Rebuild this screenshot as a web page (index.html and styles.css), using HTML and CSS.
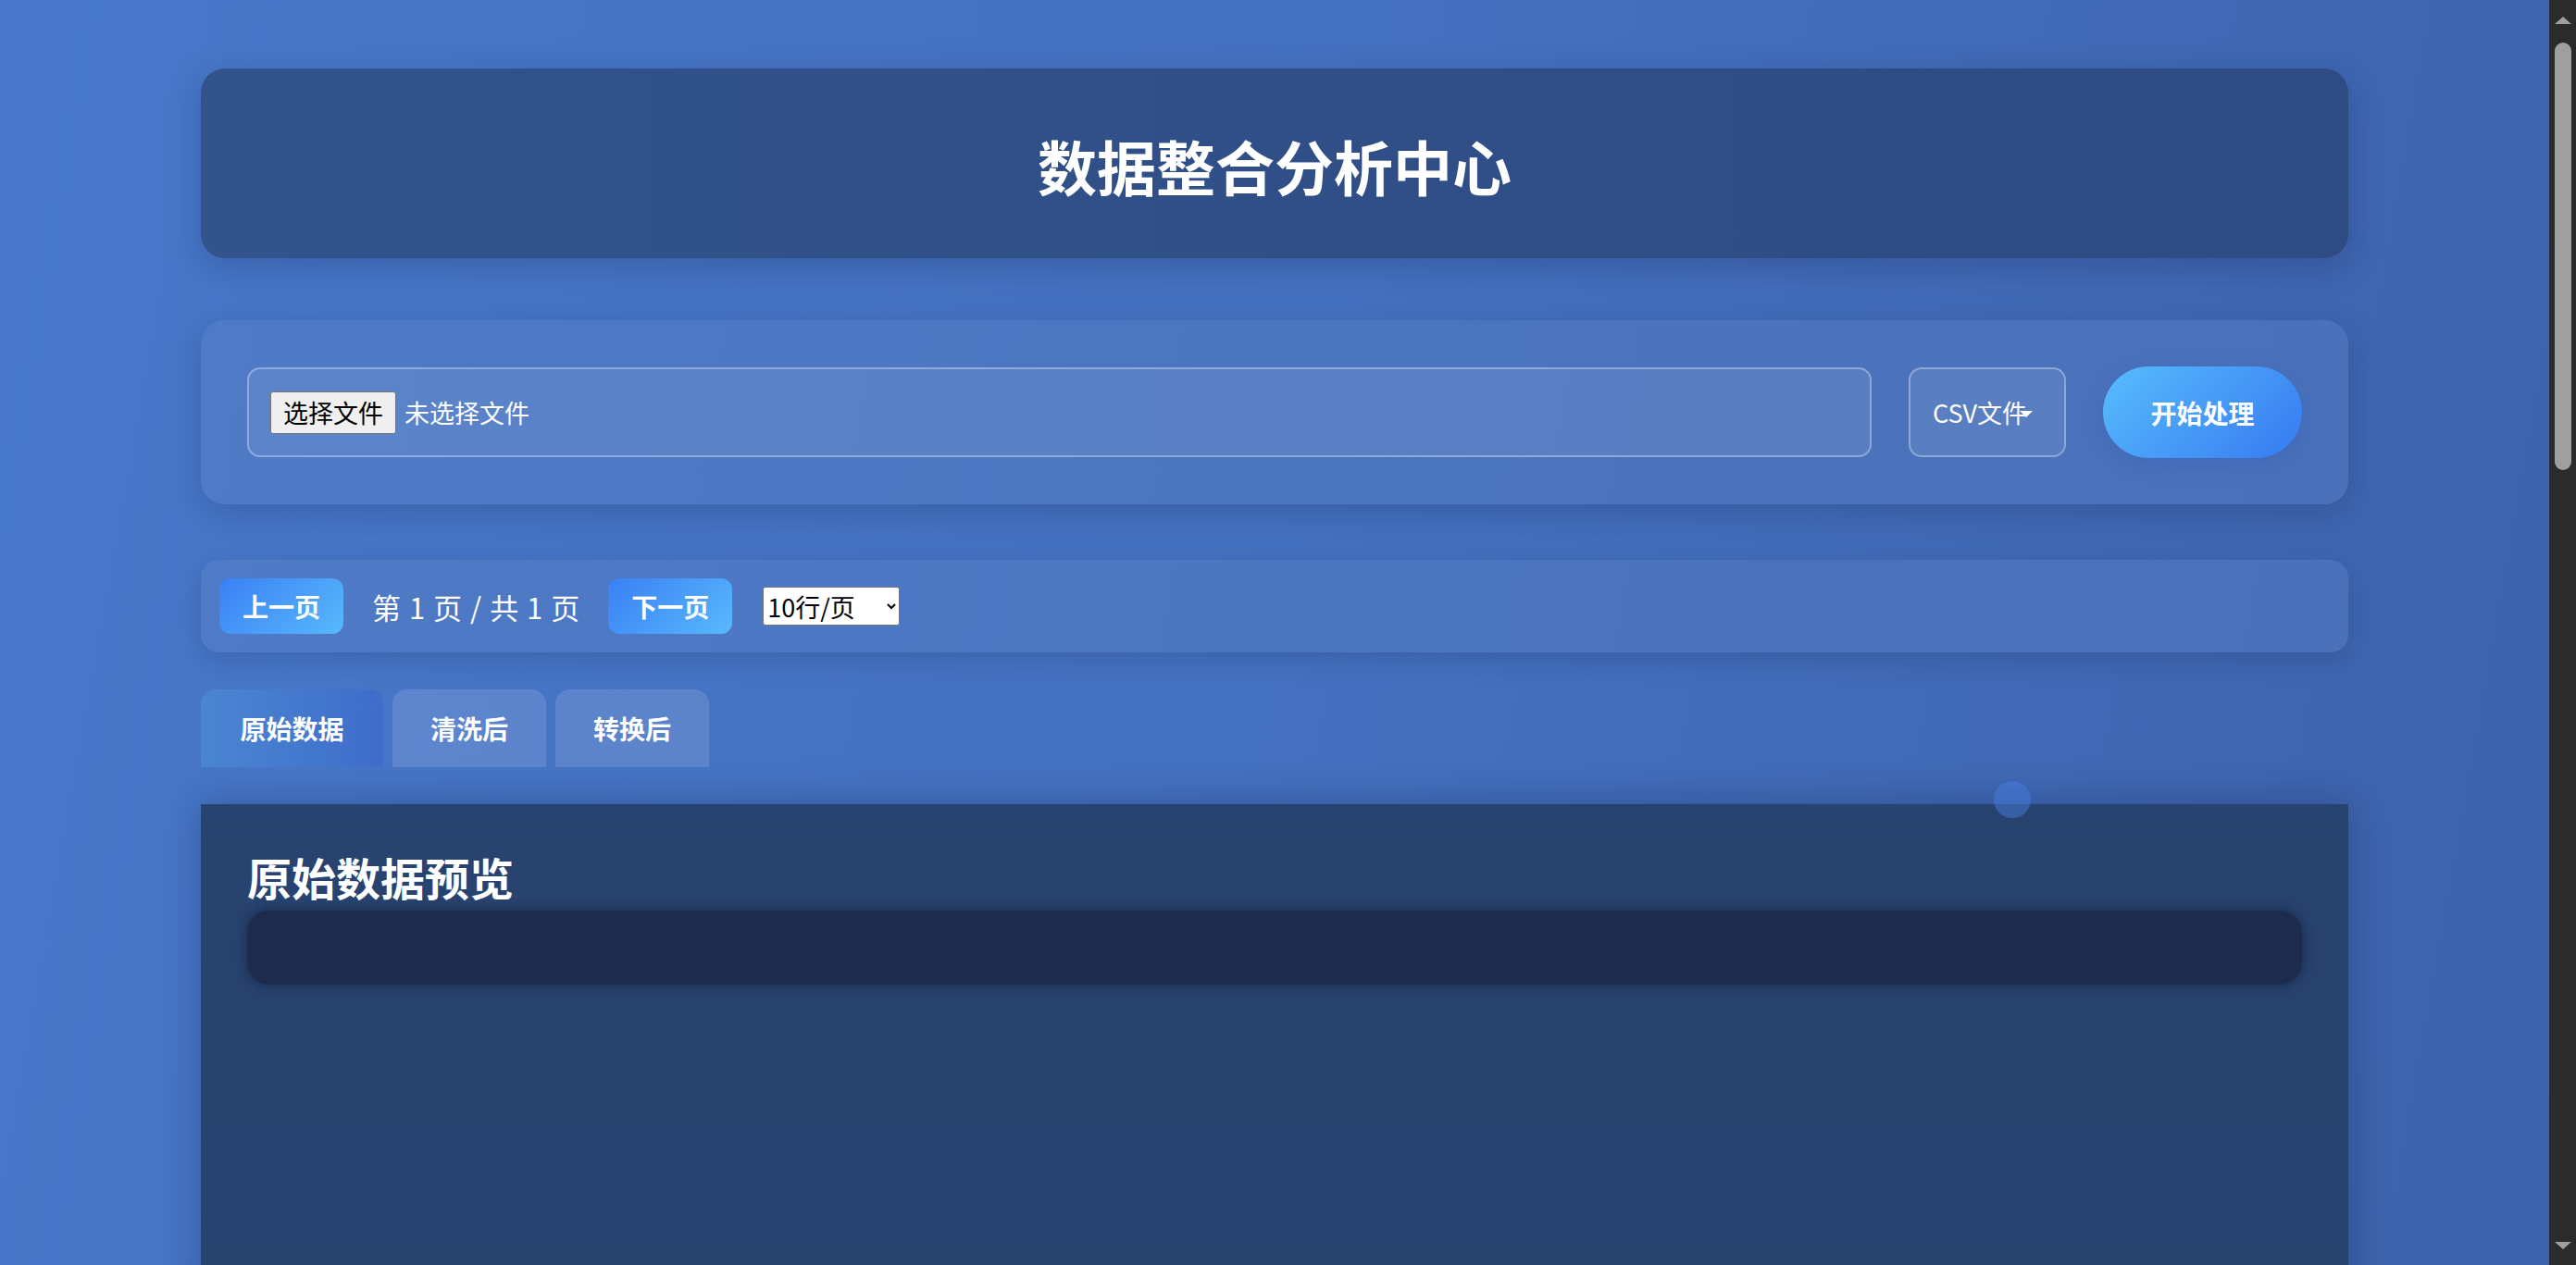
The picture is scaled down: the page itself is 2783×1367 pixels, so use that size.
FILE: index.html
```html
<!DOCTYPE html>
<html lang="zh-CN">
<head>
<meta charset="UTF-8">
<title>数据整合分析中心</title>
<link rel="stylesheet" href="styles.css">
</head>
<body>
<div class="container">
  <header class="app-header">
    <h1>数据整合分析中心</h1>
  </header>

  <section class="upload-card">
    <label class="file-field">
      <input type="file" class="file-native">
      <span class="file-btn">选择文件</span>
      <span class="file-name">未选择文件</span>
    </label>
    <div class="type-select">
      <select>
        <option>CSV文件</option>
        <option>Excel文件</option>
        <option>JSON文件</option>
      </select>
    </div>
    <button class="start-btn">开始处理</button>
  </section>

  <nav class="pager">
    <button class="pager-btn">上一页</button>
    <span class="pager-info">第 1 页 / 共 1 页</span>
    <button class="pager-btn">下一页</button>
    <select class="page-size">
      <option>10行/页</option>
      <option>20行/页</option>
      <option>50行/页</option>
    </select>
  </nav>

  <div class="tabs">
    <button class="tab tab-wide active">原始数据</button>
    <button class="tab">清洗后</button>
    <button class="tab">转换后</button>
  </div>

  <main class="panel">
    <h2>原始数据预览</h2>
    <div class="table-wrap"></div>
  </main>

  <span class="float-dot"></span>
</div>

<div class="scrollbar" aria-hidden="true">
  <span class="sb-arrow sb-up"></span>
  <span class="sb-thumb"></span>
  <span class="sb-arrow sb-down"></span>
</div>
</body>
</html>
```

FILE: styles.css
```css
* { box-sizing: border-box; }

html {
  font-family: "Microsoft YaHei", "Noto Sans CJK SC", "Noto Sans", sans-serif;
}

body {
  margin: 0;
  padding: 74px 29px 94px 0;
  color: #fff;
  background: linear-gradient(100deg, #4878ca 0%, #4471c0 50%, #3d62ac 100%) fixed;
}

.container {
  position: relative;
  width: 2320px;
  margin: 0 auto;
}

.app-header {
  height: 205px;
  border-radius: 26px;
  background: linear-gradient(90deg, #32538c, #2e4b83);
  box-shadow: 0 10px 36px rgba(10, 25, 60, 0.22);
  display: flex;
  align-items: center;
  justify-content: center;
}

.app-header h1 {
  margin: 4px 0 0;
  font-size: 64px;
  line-height: 1.2;
  font-weight: 700;
}

.upload-card {
  margin-top: 67px;
  height: 199px;
  padding: 50px;
  border-radius: 26px;
  background: linear-gradient(100deg, #4e7ac6, #4a71ba);
  box-shadow: 0 10px 36px rgba(10, 25, 60, 0.2);
  display: flex;
  align-items: center;
  gap: 40px;
}

.file-field {
  flex: 1;
  height: 97px;
  display: flex;
  align-items: center;
  padding-left: 23px;
  gap: 9px;
  border: 2px solid rgba(255, 255, 255, 0.32);
  border-radius: 14px;
  background: rgba(255, 255, 255, 0.08);
  cursor: pointer;
}

.file-native { display: none; }

.file-btn {
  height: 46px;
  padding: 0 13px;
  display: flex;
  align-items: center;
  font-size: 27px;
  color: #000;
  background: #efefef;
  border: 1px solid #767676;
  border-radius: 3px;
}

.file-name {
  font-size: 27px;
  color: #fff;
}

.type-select {
  position: relative;
  width: 170px;
  height: 97px;
  border: 2px solid rgba(255, 255, 255, 0.32);
  border-radius: 14px;
  background: rgba(255, 255, 255, 0.08);
}

.type-select select {
  appearance: none;
  -webkit-appearance: none;
  width: 100%;
  height: 100%;
  padding: 0 0 0 24px;
  border: 0;
  background: transparent;
  color: #fff;
  font-family: inherit;
  font-size: 27px;
  outline: none;
}

.type-select::after {
  content: "";
  position: absolute;
  right: 34px;
  top: 45px;
  border-left: 7px solid transparent;
  border-right: 7px solid transparent;
  border-top: 7px solid #fff;
}

.start-btn {
  width: 215px;
  height: 99px;
  border: 0;
  border-radius: 50px;
  background: linear-gradient(135deg, #58bdfd 0%, #3679f1 100%);
  color: #fff;
  font-family: inherit;
  font-size: 28px;
  font-weight: 700;
  box-shadow: 0 6px 20px rgba(30, 80, 180, 0.25);
}

.pager {
  margin-top: 60px;
  height: 100px;
  padding: 0 20px;
  border-radius: 20px;
  background: linear-gradient(100deg, #4e7ac6, #4a71ba);
  box-shadow: 0 8px 28px rgba(10, 25, 60, 0.18);
  display: flex;
  align-items: center;
  gap: 31px;
}

.pager-btn {
  width: 134px;
  height: 60px;
  border: 0;
  border-radius: 12px;
  background: linear-gradient(135deg, #3a80f5 0%, #58b9fc 100%);
  color: #fff;
  font-family: inherit;
  font-size: 28px;
  font-weight: 700;
}

.pager-info {
  font-size: 31px;
  word-spacing: 2px;
  color: #fff;
}

.page-size {
  width: 148px;
  height: 42px;
  font-family: inherit;
  font-size: 27px;
  color: #000;
  background: #fff;
  border: 1px solid #767676;
  border-radius: 3px;
  margin-left: 2px;
}

.tabs {
  margin-top: 40px;
  display: flex;
  gap: 10px;
}

.tab {
  width: 166px;
  height: 84px;
  padding: 0;
  text-align: center;
  border: 0;
  border-radius: 16px 16px 0 0;
  background: rgba(255, 255, 255, 0.12);
  color: #fff;
  font-family: inherit;
  font-size: 28px;
  font-weight: 700;
}

.tab-wide { width: 197px; }

.tab.active {
  background: linear-gradient(90deg, #4b86d2, #3e6dca);
}

.panel {
  display: block;
  margin-top: 40px;
  min-height: 2830px;
  padding: 50px;
  background: linear-gradient(180deg, #28436f 0%, #263f6c 100%);
  box-shadow: 0 0 40px rgba(10, 20, 50, 0.3);
}

.panel h2 {
  margin: 0 0 7px;
  font-size: 48px;
  line-height: 1.2;
  font-weight: 700;
}

.table-wrap {
  height: 80px;
  border-radius: 24px;
  background: #1d2c4e;
  box-shadow: 0 0 10px 3px rgba(22, 36, 66, 0.55);
}

.float-dot {
  position: absolute;
  left: 1937px;
  top: 770px;
  width: 40px;
  height: 40px;
  border-radius: 50%;
  background: rgba(70, 130, 230, 0.45);
}

/* window scrollbar drawn over the page edge */
.scrollbar {
  position: fixed;
  top: 0;
  right: 0;
  width: 29px;
  height: 100vh;
  background: #2b2b2b;
}

.sb-thumb {
  position: absolute;
  left: 6px;
  top: 46px;
  width: 18px;
  height: 462px;
  border-radius: 9px;
  background: #9f9f9f;
}

.sb-arrow {
  position: absolute;
  left: 6px;
  width: 0;
  height: 0;
  border-left: 9px solid transparent;
  border-right: 9px solid transparent;
}

.sb-up {
  top: 18px;
  border-bottom: 8px solid #9f9f9f;
}

.sb-down {
  bottom: 17px;
  border-top: 8px solid #9f9f9f;
}
```
